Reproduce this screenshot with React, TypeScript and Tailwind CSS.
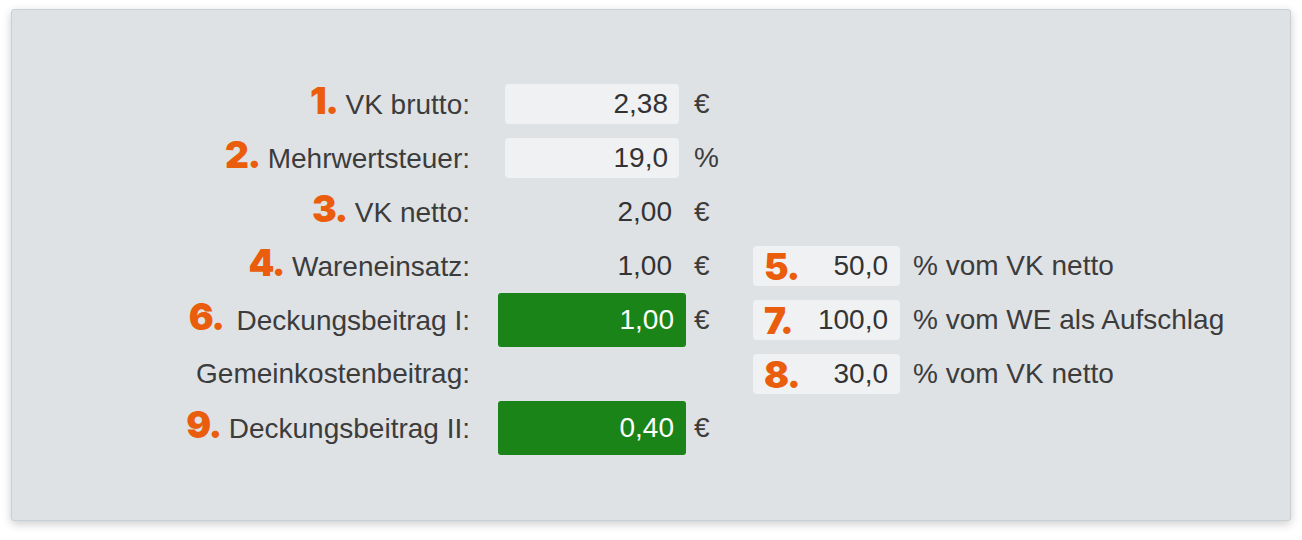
import React from "react";

type Row = {
  num?: string;
  numGap?: string;
  label: string;
  value?: string;
  kind: "input" | "plain" | "green" | "none";
  unit?: string;
  side?: { num: string; value: string; text: string };
};

const rows: Row[] = [
  { num: "1.", label: "VK brutto:", value: "2,38", kind: "input", unit: "€" },
  { num: "2.", label: "Mehrwertsteuer:", value: "19,0", kind: "input", unit: "%" },
  { num: "3.", label: "VK netto:", value: "2,00", kind: "plain", unit: "€" },
  {
    num: "4.",
    label: "Wareneinsatz:",
    value: "1,00",
    kind: "plain",
    unit: "€",
    side: { num: "5.", value: "50,0", text: "% vom VK netto" },
  },
  {
    num: "6.",
    numGap: "mr-[13px]",
    label: "Deckungsbeitrag I:",
    value: "1,00",
    kind: "green",
    unit: "€",
    side: { num: "7.", value: "100,0", text: "% vom WE als Aufschlag" },
  },
  {
    label: "Gemeinkostenbeitrag:",
    kind: "none",
    side: { num: "8.", value: "30,0", text: "% vom VK netto" },
  },
  { num: "9.", label: "Deckungsbeitrag II:", value: "0,40", kind: "green", unit: "€" },
];

function Num({ n, className = "" }: { n: string; className?: string }) {
  return (
    <span
      className={`text-[37px] leading-none font-black text-[#e95d0c] tracking-[-1.5px] ${className}`}
      style={{ fontFamily: "Inter, 'Open Sans', sans-serif" }}
    >
      {n}
    </span>
  );
}

export default function App() {
  return (
    <div className="w-[1302px] h-[540px] bg-white pt-[9px] pl-[11px]">
      <div
        className="w-[1280px] h-[512px] bg-[#dfe2e5] border border-[#c8d0d5] rounded-[3px] shadow-[0_3px_10px_rgba(0,0,0,0.2)] pt-[67px] text-[28px] text-[#3c3c3c]"
        style={{ fontFamily: "'Liberation Sans', Arial, sans-serif" }}
      >
        <div className="grid grid-cols-[486px_188px_67px_1fr] auto-rows-[54px] items-center">
          {rows.map((r, i) => (
            <React.Fragment key={i}>
              <div className="flex items-baseline justify-end pr-[28px]">
                {r.num && <Num n={r.num} className={r.numGap ?? "mr-[8px]"} />}
                <span>{r.label}</span>
              </div>
              <div className="h-full flex items-center">
                {r.kind === "input" && (
                  <div className="mx-[7px] w-[176px] h-[40px] bg-[#eff1f3] rounded-[4px] flex items-center justify-end pr-[11px] text-[#333]">
                    {r.value}
                  </div>
                )}
                {r.kind === "plain" && (
                  <div className="w-full flex justify-end pr-[14px] text-[#333]">{r.value}</div>
                )}
                {r.kind === "green" && (
                  <div className="w-full h-full bg-[#1a8419] rounded-[3px] flex items-center justify-end pr-[12px] text-white">
                    {r.value}
                  </div>
                )}
              </div>
              <div className="pl-[8px]">{r.unit}</div>
              <div className="flex items-center">
                {r.side && (
                  <>
                    <div className="w-[147px] h-[40px] bg-[#eff1f3] rounded-[4px] flex items-center justify-between pl-[11px] pr-[12px] text-[#333]">
                      <Num n={r.side.num} />
                      <span>{r.side.value}</span>
                    </div>
                    <span className="ml-[13px]">{r.side.text}</span>
                  </>
                )}
              </div>
            </React.Fragment>
          ))}
        </div>
      </div>
    </div>
  );
}
